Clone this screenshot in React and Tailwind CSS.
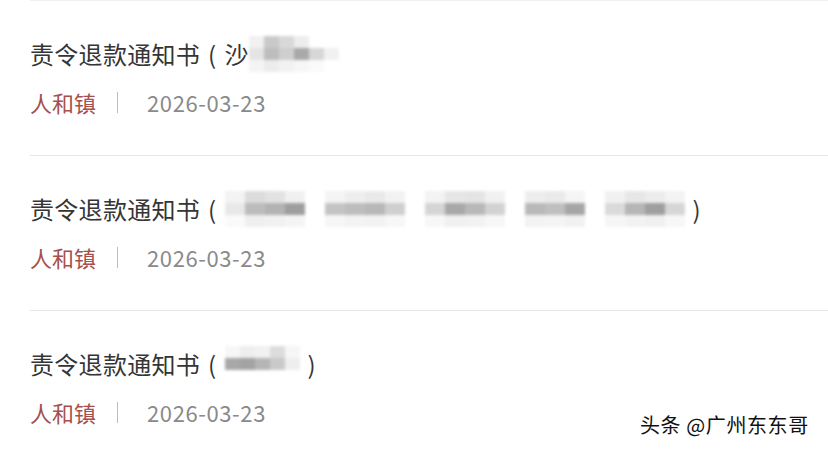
import React from 'react';

const font = { fontFamily: '"Noto Sans CJK SC", "Noto Sans", sans-serif' };

// pixelated redaction: columns of grey cells, softened by blur
function Mosaic({ cells, w = 16 }) {
  return (
    <span className="inline-flex items-center align-middle blur-[1.5px]">
      {cells.map((c, i) => (
        <span key={i} className="flex flex-col">
          {c.map((g, j) => (
            <span key={j} className="block h-[12px]" style={{ background: g, width: w }} />
          ))}
        </span>
      ))}
    </span>
  );
}

const rows = [
  {
    pre: '沙',
    w: 15,
    cells: [
      ['#f1f1f1', '#e4e4e4', '#f4f4f4'],
      ['#c9c9c9', '#bdbdbd', '#ececec'],
      ['#d8d8d8', '#cfcfcf', '#f2f2f2'],
      ['#ededed', '#a9a9a9', '#f6f6f6'],
      ['#ffffff', '#d7d7d7', '#fafafa'],
      ['#ffffff', '#f1f1f1', '#ffffff'],
    ],
    close: false,
  },
  {
    pre: '',
    w: 20,
    cells: [
      ['#f3f3f3', '#e8e8e8', '#fafafa'],
      ['#dcdcdc', '#bcbcbc', '#efefef'],
      ['#e2e2e2', '#b3b3b3', '#f1f1f1'],
      ['#f0f0f0', '#9e9e9e', '#f4f4f4'],
      ['#ffffff', '#ffffff', '#ffffff'],
      ['#f4f4f4', '#c4c4c4', '#f6f6f6'],
      ['#eeeeee', '#bdbdbd', '#f3f3f3'],
      ['#e9e9e9', '#b8b8b8', '#f2f2f2'],
      ['#f2f2f2', '#cfcfcf', '#f7f7f7'],
      ['#ffffff', '#ffffff', '#ffffff'],
      ['#f3f3f3', '#d5d5d5', '#f7f7f7'],
      ['#e6e6e6', '#a8a8a8', '#f0f0f0'],
      ['#e4e4e4', '#b8b8b8', '#f2f2f2'],
      ['#f1f1f1', '#d2d2d2', '#f7f7f7'],
      ['#ffffff', '#ffffff', '#ffffff'],
      ['#ededed', '#b9b9b9', '#f3f3f3'],
      ['#eaeaea', '#bfbfbf', '#f4f4f4'],
      ['#f5f5f5', '#a6a6a6', '#f1f1f1'],
      ['#ffffff', '#ffffff', '#ffffff'],
      ['#f1f1f1', '#dadada', '#f6f6f6'],
      ['#e7e7e7', '#b6b6b6', '#f2f2f2'],
      ['#ececec', '#9f9f9f', '#f0f0f0'],
      ['#f3f3f3', '#d6d6d6', '#f7f7f7'],
    ],
    close: true,
  },
  {
    pre: '',
    w: 15,
    cells: [
      ['#f7f7f7', '#a8a8a8', '#ffffff'],
      ['#eeeeee', '#a3a3a3', '#ffffff'],
      ['#f1f1f1', '#b5b5b5', '#ffffff'],
      ['#dcdcdc', '#c9c9c9', '#ffffff'],
      ['#f6f6f6', '#eeeeee', '#ffffff'],
    ],
    close: true,
  },
];

function Row({ row, last }) {
  return (
    <div className={`ml-[30px] pt-[38px] pb-[38px] ${last ? '' : 'border-b border-[#e6e6e6]'}`}>
      <div className="flex items-center h-[30px] text-[24px] tracking-[0.3px] leading-[30px] text-[#353535] whitespace-nowrap">
        <span>责令退款通知书</span>
        <span className="ml-[8px] mr-[8px]">(</span>
        {row.pre && <span>{row.pre}</span>}
        <Mosaic cells={row.cells} w={row.w} />
        {row.close && <span className="ml-[8px]">)</span>}
      </div>
      <div className="flex items-center h-[30px] mt-[18px] text-[22px] leading-[30px] whitespace-nowrap">
        <span className="text-[#a5504c]">人和镇</span>
        <span className="ml-[21px] w-px h-[21px] bg-[#bdbdbd]" />
        <span className="ml-[29px] tracking-[0.6px] text-[#8a8a8a]">2026-03-23</span>
      </div>
    </div>
  );
}

export default function App() {
  return (
    <div className="relative w-[828px] h-[450px] bg-white overflow-hidden" style={font}>
      <div className="ml-[30px] border-t border-[#f0f0f0]" />
      {rows.map((r, i) => (
        <Row key={i} row={r} last={i === rows.length - 1} />
      ))}
      <div
        className="absolute left-[640px] top-[411px] text-[20px] tracking-[0.6px] leading-[28px] text-[#111] whitespace-nowrap"
        style={{ textShadow: '1px 1px 0 #fff, -1px -1px 0 #fff' }}
      >
        头条 @广州东东哥
      </div>
    </div>
  );
}
